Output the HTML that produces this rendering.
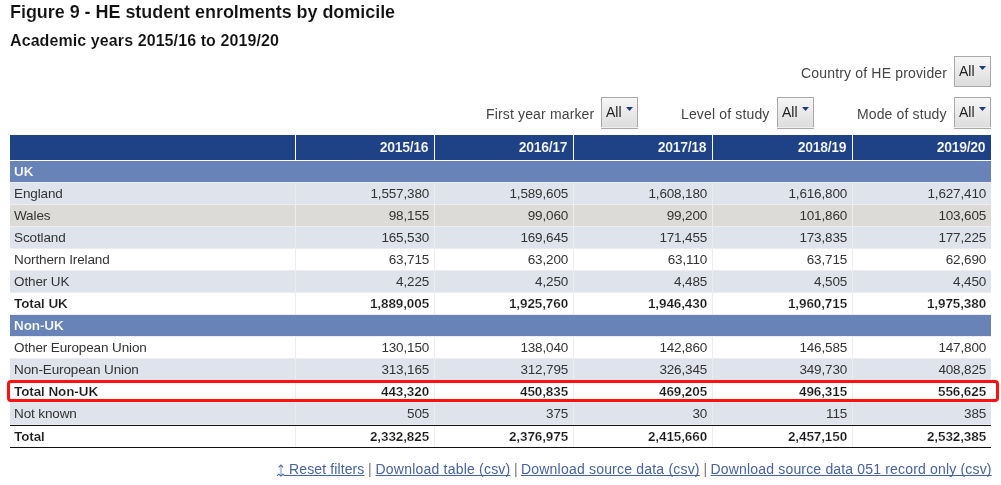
<!DOCTYPE html>
<html><head><meta charset="utf-8"><style>
*{margin:0;padding:0;box-sizing:border-box}
html,body{width:1001px;height:485px;overflow:hidden;background:#fff}
body{position:relative;font-family:"Liberation Sans",sans-serif;color:#333}
.a{position:absolute;white-space:nowrap}
.t1{left:10px;top:2px;letter-spacing:-0.045px;-webkit-text-stroke:0.12px #fff;font-size:18px;font-weight:bold;color:#111;line-height:21px}
.t2{left:10px;top:31px;letter-spacing:0.09px;-webkit-text-stroke:0.1px #fff;font-size:16px;font-weight:bold;color:#111;line-height:19px}
.lab{font-size:14px;color:#444;line-height:16px}
.btn{position:absolute;width:37px;height:31px;border:1px solid #a9a9a9;background:linear-gradient(#f6f6f6,#dcdcdc);}
.btn span{position:absolute;left:4px;top:6px;font-size:14px;line-height:16px;color:#222}
.btn svg{position:absolute;left:0;top:0}
.b2{height:32px}
.b2::after{content:"";position:absolute;left:-1px;right:-1px;bottom:0;height:1px;background:#efefef}
.cell{position:absolute;font-size:13.5px;line-height:15px;white-space:nowrap}
.lb{left:14px;letter-spacing:-0.12px}
.nm{text-align:right;padding-right:4.85px;letter-spacing:-0.15px}
.hd{font-size:14px;font-weight:bold;color:#fff;-webkit-text-stroke:0.18px #1f4287;text-align:right;padding-right:5.7px;letter-spacing:-0.3px}
.bd{font-weight:bold;letter-spacing:-0.1px;-webkit-text-stroke:0.18px #fff}
.nm.bd{padding-right:4.9px}
.r{position:absolute;left:10px;width:981px}
.links{font-size:14px;line-height:16px;color:#777}
.links a{color:#4562a2;text-decoration:underline;text-decoration-skip-ink:none}
</style></head><body><div id="w" style="position:absolute;left:0;top:0;width:1001px;height:485px;will-change:transform">
<div class="a t1">Figure 9 - HE student enrolments by domicile</div>
<div class="a t2">Academic years 2015/16 to 2019/20</div>
<div class="a lab" style="left:801px;top:65px;letter-spacing:0.17px">Country of HE provider</div>
<div class="btn" style="left:954px;top:56px"><span>All</span><svg width="35" height="29"><path d="M24 9H31L27.5 13Z" fill="#1f3a7a"/></svg></div>
<div class="a lab" style="left:486px;top:106px;letter-spacing:0.15px">First year marker</div>
<div class="btn b2" style="left:601px;top:97px"><span>All</span><svg width="35" height="29"><path d="M24 9H31L27.5 13Z" fill="#1f3a7a"/></svg></div>
<div class="a lab" style="left:681px;top:106px;letter-spacing:0.15px">Level of study</div>
<div class="btn b2" style="left:777px;top:97px"><span>All</span><svg width="35" height="29"><path d="M24 9H31L27.5 13Z" fill="#1f3a7a"/></svg></div>
<div class="a lab" style="left:857px;top:106px;letter-spacing:0.13px">Mode of study</div>
<div class="btn b2" style="left:954px;top:97px"><span>All</span><svg width="35" height="29"><path d="M24 9H31L27.5 13Z" fill="#1f3a7a"/></svg></div>
<div class="r" style="top:161px;height:286px;background:#ededed"></div>
<div class="r" style="top:135px;height:25px;background:#1f4287"></div>
<div class="a" style="left:295px;top:135px;width:1px;height:25px;background:#fff"></div>
<div class="cell hd" style="left:296px;width:138px;top:140px">2015/16</div>
<div class="a" style="left:434px;top:135px;width:1px;height:25px;background:#fff"></div>
<div class="cell hd" style="left:435px;width:138px;top:140px">2016/17</div>
<div class="a" style="left:573px;top:135px;width:1px;height:25px;background:#fff"></div>
<div class="cell hd" style="left:574px;width:138px;top:140px">2017/18</div>
<div class="a" style="left:712px;top:135px;width:1px;height:25px;background:#fff"></div>
<div class="cell hd" style="left:713px;width:139px;top:140px">2018/19</div>
<div class="a" style="left:852px;top:135px;width:1px;height:25px;background:#fff"></div>
<div class="cell hd" style="left:853px;width:138px;top:140px">2019/20</div>
<div class="r" style="top:161px;height:21px;background:#6783b8"></div>
<div class="cell lb bd" style="top:164px;color:#fff;-webkit-text-stroke:0.18px #6783b8">UK</div>
<div class="a" style="left:10px;top:183px;width:285px;height:21px;background:#dfe3eb"></div>
<div class="a" style="left:296px;top:183px;width:138px;height:21px;background:#dfe3eb"></div>
<div class="a" style="left:435px;top:183px;width:138px;height:21px;background:#dfe3eb"></div>
<div class="a" style="left:574px;top:183px;width:138px;height:21px;background:#dfe3eb"></div>
<div class="a" style="left:713px;top:183px;width:139px;height:21px;background:#dfe3eb"></div>
<div class="a" style="left:853px;top:183px;width:138px;height:21px;background:#dfe3eb"></div>
<div class="cell lb" style="top:186px;color:#333">England</div>
<div class="cell nm" style="left:296px;width:138px;top:186px;color:#333">1,557,380</div>
<div class="cell nm" style="left:435px;width:138px;top:186px;color:#333">1,589,605</div>
<div class="cell nm" style="left:574px;width:138px;top:186px;color:#333">1,608,180</div>
<div class="cell nm" style="left:713px;width:139px;top:186px;color:#333">1,616,800</div>
<div class="cell nm" style="left:853px;width:138px;top:186px;color:#333">1,627,410</div>
<div class="a" style="left:10px;top:205px;width:285px;height:21px;background:#dcdbd7"></div>
<div class="a" style="left:296px;top:205px;width:138px;height:21px;background:#dcdbd7"></div>
<div class="a" style="left:435px;top:205px;width:138px;height:21px;background:#dcdbd7"></div>
<div class="a" style="left:574px;top:205px;width:138px;height:21px;background:#dcdbd7"></div>
<div class="a" style="left:713px;top:205px;width:139px;height:21px;background:#dcdbd7"></div>
<div class="a" style="left:853px;top:205px;width:138px;height:21px;background:#dcdbd7"></div>
<div class="cell lb" style="top:208px;color:#333">Wales</div>
<div class="cell nm" style="left:296px;width:138px;top:208px;color:#333">98,155</div>
<div class="cell nm" style="left:435px;width:138px;top:208px;color:#333">99,060</div>
<div class="cell nm" style="left:574px;width:138px;top:208px;color:#333">99,200</div>
<div class="cell nm" style="left:713px;width:139px;top:208px;color:#333">101,860</div>
<div class="cell nm" style="left:853px;width:138px;top:208px;color:#333">103,605</div>
<div class="a" style="left:10px;top:227px;width:285px;height:21px;background:#dfe3eb"></div>
<div class="a" style="left:296px;top:227px;width:138px;height:21px;background:#dfe3eb"></div>
<div class="a" style="left:435px;top:227px;width:138px;height:21px;background:#dfe3eb"></div>
<div class="a" style="left:574px;top:227px;width:138px;height:21px;background:#dfe3eb"></div>
<div class="a" style="left:713px;top:227px;width:139px;height:21px;background:#dfe3eb"></div>
<div class="a" style="left:853px;top:227px;width:138px;height:21px;background:#dfe3eb"></div>
<div class="cell lb" style="top:230px;color:#333">Scotland</div>
<div class="cell nm" style="left:296px;width:138px;top:230px;color:#333">165,530</div>
<div class="cell nm" style="left:435px;width:138px;top:230px;color:#333">169,645</div>
<div class="cell nm" style="left:574px;width:138px;top:230px;color:#333">171,455</div>
<div class="cell nm" style="left:713px;width:139px;top:230px;color:#333">173,835</div>
<div class="cell nm" style="left:853px;width:138px;top:230px;color:#333">177,225</div>
<div class="a" style="left:10px;top:249px;width:285px;height:21px;background:#fff"></div>
<div class="a" style="left:296px;top:249px;width:138px;height:21px;background:#fff"></div>
<div class="a" style="left:435px;top:249px;width:138px;height:21px;background:#fff"></div>
<div class="a" style="left:574px;top:249px;width:138px;height:21px;background:#fff"></div>
<div class="a" style="left:713px;top:249px;width:139px;height:21px;background:#fff"></div>
<div class="a" style="left:853px;top:249px;width:138px;height:21px;background:#fff"></div>
<div class="cell lb" style="top:252px;color:#333">Northern Ireland</div>
<div class="cell nm" style="left:296px;width:138px;top:252px;color:#333">63,715</div>
<div class="cell nm" style="left:435px;width:138px;top:252px;color:#333">63,200</div>
<div class="cell nm" style="left:574px;width:138px;top:252px;color:#333">63,110</div>
<div class="cell nm" style="left:713px;width:139px;top:252px;color:#333">63,715</div>
<div class="cell nm" style="left:853px;width:138px;top:252px;color:#333">62,690</div>
<div class="a" style="left:10px;top:271px;width:285px;height:21px;background:#dfe3eb"></div>
<div class="a" style="left:296px;top:271px;width:138px;height:21px;background:#dfe3eb"></div>
<div class="a" style="left:435px;top:271px;width:138px;height:21px;background:#dfe3eb"></div>
<div class="a" style="left:574px;top:271px;width:138px;height:21px;background:#dfe3eb"></div>
<div class="a" style="left:713px;top:271px;width:139px;height:21px;background:#dfe3eb"></div>
<div class="a" style="left:853px;top:271px;width:138px;height:21px;background:#dfe3eb"></div>
<div class="cell lb" style="top:274px;color:#333">Other UK</div>
<div class="cell nm" style="left:296px;width:138px;top:274px;color:#333">4,225</div>
<div class="cell nm" style="left:435px;width:138px;top:274px;color:#333">4,250</div>
<div class="cell nm" style="left:574px;width:138px;top:274px;color:#333">4,485</div>
<div class="cell nm" style="left:713px;width:139px;top:274px;color:#333">4,505</div>
<div class="cell nm" style="left:853px;width:138px;top:274px;color:#333">4,450</div>
<div class="a" style="left:10px;top:293px;width:285px;height:21px;background:#fff"></div>
<div class="a" style="left:296px;top:293px;width:138px;height:21px;background:#fff"></div>
<div class="a" style="left:435px;top:293px;width:138px;height:21px;background:#fff"></div>
<div class="a" style="left:574px;top:293px;width:138px;height:21px;background:#fff"></div>
<div class="a" style="left:713px;top:293px;width:139px;height:21px;background:#fff"></div>
<div class="a" style="left:853px;top:293px;width:138px;height:21px;background:#fff"></div>
<div class="cell lb bd" style="top:296px;color:#1a1a1a">Total UK</div>
<div class="cell nm bd" style="left:296px;width:138px;top:296px;color:#1a1a1a">1,889,005</div>
<div class="cell nm bd" style="left:435px;width:138px;top:296px;color:#1a1a1a">1,925,760</div>
<div class="cell nm bd" style="left:574px;width:138px;top:296px;color:#1a1a1a">1,946,430</div>
<div class="cell nm bd" style="left:713px;width:139px;top:296px;color:#1a1a1a">1,960,715</div>
<div class="cell nm bd" style="left:853px;width:138px;top:296px;color:#1a1a1a">1,975,380</div>
<div class="r" style="top:315px;height:21px;background:#6783b8"></div>
<div class="cell lb bd" style="top:318px;color:#fff;-webkit-text-stroke:0.18px #6783b8">Non-UK</div>
<div class="a" style="left:10px;top:337px;width:285px;height:21px;background:#fff"></div>
<div class="a" style="left:296px;top:337px;width:138px;height:21px;background:#fff"></div>
<div class="a" style="left:435px;top:337px;width:138px;height:21px;background:#fff"></div>
<div class="a" style="left:574px;top:337px;width:138px;height:21px;background:#fff"></div>
<div class="a" style="left:713px;top:337px;width:139px;height:21px;background:#fff"></div>
<div class="a" style="left:853px;top:337px;width:138px;height:21px;background:#fff"></div>
<div class="cell lb" style="top:340px;color:#333">Other European Union</div>
<div class="cell nm" style="left:296px;width:138px;top:340px;color:#333">130,150</div>
<div class="cell nm" style="left:435px;width:138px;top:340px;color:#333">138,040</div>
<div class="cell nm" style="left:574px;width:138px;top:340px;color:#333">142,860</div>
<div class="cell nm" style="left:713px;width:139px;top:340px;color:#333">146,585</div>
<div class="cell nm" style="left:853px;width:138px;top:340px;color:#333">147,800</div>
<div class="a" style="left:10px;top:359px;width:285px;height:21px;background:#dfe3eb"></div>
<div class="a" style="left:296px;top:359px;width:138px;height:21px;background:#dfe3eb"></div>
<div class="a" style="left:435px;top:359px;width:138px;height:21px;background:#dfe3eb"></div>
<div class="a" style="left:574px;top:359px;width:138px;height:21px;background:#dfe3eb"></div>
<div class="a" style="left:713px;top:359px;width:139px;height:21px;background:#dfe3eb"></div>
<div class="a" style="left:853px;top:359px;width:138px;height:21px;background:#dfe3eb"></div>
<div class="cell lb" style="top:362px;color:#333">Non-European Union</div>
<div class="cell nm" style="left:296px;width:138px;top:362px;color:#333">313,165</div>
<div class="cell nm" style="left:435px;width:138px;top:362px;color:#333">312,795</div>
<div class="cell nm" style="left:574px;width:138px;top:362px;color:#333">326,345</div>
<div class="cell nm" style="left:713px;width:139px;top:362px;color:#333">349,730</div>
<div class="cell nm" style="left:853px;width:138px;top:362px;color:#333">408,825</div>
<div class="a" style="left:10px;top:381px;width:285px;height:21px;background:#fff"></div>
<div class="a" style="left:296px;top:381px;width:138px;height:21px;background:#fff"></div>
<div class="a" style="left:435px;top:381px;width:138px;height:21px;background:#fff"></div>
<div class="a" style="left:574px;top:381px;width:138px;height:21px;background:#fff"></div>
<div class="a" style="left:713px;top:381px;width:139px;height:21px;background:#fff"></div>
<div class="a" style="left:853px;top:381px;width:138px;height:21px;background:#fff"></div>
<div class="cell lb bd" style="top:384px;color:#1a1a1a">Total Non-UK</div>
<div class="cell nm bd" style="left:296px;width:138px;top:384px;color:#1a1a1a">443,320</div>
<div class="cell nm bd" style="left:435px;width:138px;top:384px;color:#1a1a1a">450,835</div>
<div class="cell nm bd" style="left:574px;width:138px;top:384px;color:#1a1a1a">469,205</div>
<div class="cell nm bd" style="left:713px;width:139px;top:384px;color:#1a1a1a">496,315</div>
<div class="cell nm bd" style="left:853px;width:138px;top:384px;color:#1a1a1a">556,625</div>
<div class="a" style="left:10px;top:403px;width:285px;height:21px;background:#dfe3eb"></div>
<div class="a" style="left:296px;top:403px;width:138px;height:21px;background:#dfe3eb"></div>
<div class="a" style="left:435px;top:403px;width:138px;height:21px;background:#dfe3eb"></div>
<div class="a" style="left:574px;top:403px;width:138px;height:21px;background:#dfe3eb"></div>
<div class="a" style="left:713px;top:403px;width:139px;height:21px;background:#dfe3eb"></div>
<div class="a" style="left:853px;top:403px;width:138px;height:21px;background:#dfe3eb"></div>
<div class="cell lb" style="top:406px;color:#333">Not known</div>
<div class="cell nm" style="left:296px;width:138px;top:406px;color:#333">505</div>
<div class="cell nm" style="left:435px;width:138px;top:406px;color:#333">375</div>
<div class="cell nm" style="left:574px;width:138px;top:406px;color:#333">30</div>
<div class="cell nm" style="left:713px;width:139px;top:406px;color:#333">115</div>
<div class="cell nm" style="left:853px;width:138px;top:406px;color:#333">385</div>
<div class="a" style="left:10px;top:426px;width:285px;height:21px;background:#fff"></div>
<div class="a" style="left:296px;top:426px;width:138px;height:21px;background:#fff"></div>
<div class="a" style="left:435px;top:426px;width:138px;height:21px;background:#fff"></div>
<div class="a" style="left:574px;top:426px;width:138px;height:21px;background:#fff"></div>
<div class="a" style="left:713px;top:426px;width:139px;height:21px;background:#fff"></div>
<div class="a" style="left:853px;top:426px;width:138px;height:21px;background:#fff"></div>
<div class="cell lb bd" style="top:429px;color:#1a1a1a">Total</div>
<div class="cell nm bd" style="left:296px;width:138px;top:429px;color:#1a1a1a">2,332,825</div>
<div class="cell nm bd" style="left:435px;width:138px;top:429px;color:#1a1a1a">2,376,975</div>
<div class="cell nm bd" style="left:574px;width:138px;top:429px;color:#1a1a1a">2,415,660</div>
<div class="cell nm bd" style="left:713px;width:139px;top:429px;color:#1a1a1a">2,457,150</div>
<div class="cell nm bd" style="left:853px;width:138px;top:429px;color:#1a1a1a">2,532,385</div>
<div class="r" style="top:425px;height:1px;background:#111"></div>
<div class="r" style="top:447px;height:1px;background:#111"></div>
<div class="a" style="left:7px;top:380px;width:992px;height:22px;border:3px solid #f11;border-radius:4px"></div>
<svg class="a" style="left:0;top:0" width="1001" height="485"><path d="M280.9 465.2V475.5" stroke="#bccadf" stroke-width="2" fill="none"/><path d="M278.7 467.3L280.9 465L283.1 467.3M277 475.6L278.9 474.3L280.9 476L282.9 474.3L284.3 475.4" stroke="#4d68a3" stroke-width="1.1" fill="none"/><path d="M284 475.5H286" stroke="#4562a2" stroke-width="1"/></svg>
<div class="a links" style="left:285px;top:461px;letter-spacing:0.12px"><a>&nbsp;Reset filters</a></div>
<div class="a links" style="left:368px;top:462px;line-height:14px">|</div>
<div class="a links" style="left:375.5px;top:461px;letter-spacing:0.21px"><a>Download table (csv)</a></div>
<div class="a links" style="left:514px;top:462px;line-height:14px">|</div>
<div class="a links" style="left:521px;top:461px;letter-spacing:0.2px"><a>Download source data (csv)</a></div>
<div class="a links" style="left:703.5px;top:462px;line-height:14px">|</div>
<div class="a links" style="left:710.6px;top:461px;letter-spacing:0.17px"><a>Download source data 051 record only (csv)</a></div>
</div></body></html>
